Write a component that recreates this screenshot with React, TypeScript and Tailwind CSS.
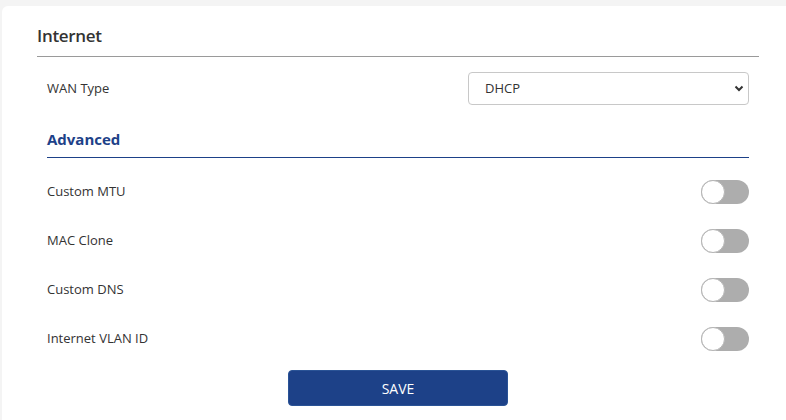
import React, { useState } from 'react';

const rows = ['Custom MTU', 'MAC Clone', 'Custom DNS', 'Internet VLAN ID'];

const Toggle: React.FC<{ on: boolean; onChange: () => void }> = ({ on, onChange }) => (
  <button
    type="button"
    onClick={onChange}
    className={`relative h-[24px] w-[48px] rounded-full ${on ? 'bg-[#1d4188]' : 'bg-[#adadad]'}`}
  >
    <span
      className={`absolute top-0 h-[24px] w-[24px] rounded-full border border-[#b5b5b5] bg-white ${on ? 'left-[24px]' : 'left-0'}`}
    />
  </button>
);

export default function App() {
  const [wan, setWan] = useState('DHCP');
  const [flags, setFlags] = useState<boolean[]>([false, false, false, false]);

  return (
    <div className="h-[420px] w-[786px] overflow-hidden bg-[#f4f4f4] pl-[2px] pt-[6px] font-['Open_Sans',sans-serif] text-[#333]">
      <div className="h-[430px] w-[820px] rounded-tl-[6px] bg-white pl-[35px] pr-[63px] pt-[20px]">
        <h2 className="text-[17px] font-semibold leading-[20px] tracking-[-0.3px] text-[#333]">Internet</h2>
        <div className="mt-[10px] h-px bg-[#9a9a9a]" />

        <div className="pl-[10px] pr-[10px]">
          <div className="mt-[15px] flex h-[33px] items-center justify-between">
            <span className="text-[13px]">WAN Type</span>
            <div className="relative">
              <select
                value={wan}
                onChange={(e) => setWan(e.target.value)}
                className="h-[33px] w-[281px] appearance-none rounded-[4px] border border-[#c8c8c8] bg-white pl-[16px] text-[13px] text-[#333] outline-none"
              >
                <option>DHCP</option>
                <option>Static IP</option>
                <option>PPPoE</option>
              </select>
              <svg
                className="pointer-events-none absolute right-[5px] top-[13px]"
                width="10"
                height="7"
                viewBox="0 0 10 7"
              >
                <path d="M1.5 1.5 L5 5 L8.5 1.5" fill="none" stroke="#333" strokeWidth="2" />
              </svg>
            </div>
          </div>

          <div className="mt-[23px] text-[15px] font-bold leading-[22px] text-[#1d4188]">Advanced</div>
          <div className="mt-[7px] h-px bg-[#1d4188]" />

          <div className="mt-[9px] flex flex-col">
            {rows.map((r, i) => (
              <div key={r} className="flex h-[49px] items-center justify-between">
                <span className="text-[13px]">{r}</span>
                <Toggle
                  on={flags[i]}
                  onChange={() => setFlags(flags.map((f, j) => (j === i ? !f : f)))}
                />
              </div>
            ))}
          </div>

          <div className="mt-[7px] flex justify-center">
            <button
              type="button"
              className="h-[36px] w-[220px] rounded-[4px] border border-[#2a5396] bg-[#1d4188] text-[14px] text-white"
            >
              SAVE
            </button>
          </div>
        </div>
      </div>
    </div>
  );
}
